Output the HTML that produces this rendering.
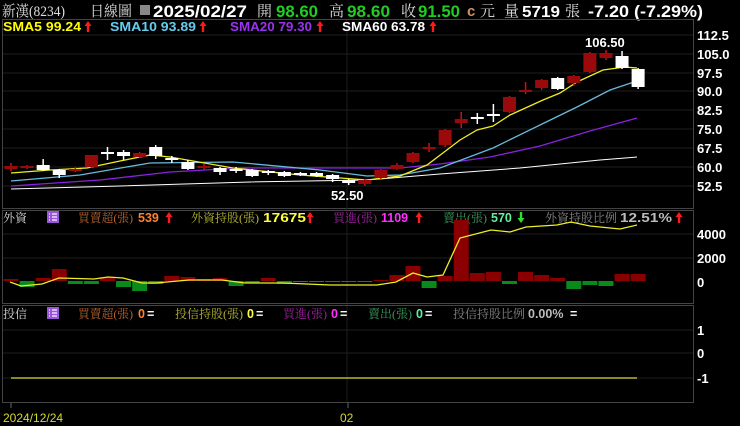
<!DOCTYPE html>
<html><head><meta charset="utf-8"><style>
html,body{margin:0;padding:0;background:#000;width:740px;height:426px;overflow:hidden}
svg{display:block}
.c{font-family:"Liberation Sans","Noto Sans CJK TC",sans-serif}
.s{font-family:"Liberation Serif","Noto Serif CJK SC",serif}
</style></head><body>
<svg width="740" height="426" viewBox="0 0 740 426" xmlns="http://www.w3.org/2000/svg">
<rect width="740" height="426" fill="#000"/>
<g font-size="15">
<text x="2" y="16" fill="#ddd" class="s" textLength="63" lengthAdjust="spacingAndGlyphs">新漢(8234)</text>
<text x="90" y="16" fill="#ddd" class="s" textLength="42" lengthAdjust="spacingAndGlyphs">日線圖</text>
<rect x="140" y="5" width="10" height="10" fill="#888"/>
<text x="153" y="17" fill="#fff" class="c" font-weight="bold" font-size="17" textLength="94" lengthAdjust="spacingAndGlyphs">2025/02/27</text>
<text x="257" y="16" fill="#ddd" class="s">開</text>
<text x="276" y="17" fill="#22cc22" class="c" font-weight="bold" font-size="17" textLength="42" lengthAdjust="spacingAndGlyphs">98.60</text>
<text x="329" y="16" fill="#ddd" class="s">高</text>
<text x="347" y="17" fill="#22cc22" class="c" font-weight="bold" font-size="17" textLength="43" lengthAdjust="spacingAndGlyphs">98.60</text>
<text x="401" y="16" fill="#ddd" class="s">收</text>
<text x="418" y="17" fill="#22cc22" class="c" font-weight="bold" font-size="17" textLength="42" lengthAdjust="spacingAndGlyphs">91.50</text>
<text x="467" y="16" fill="#d09060" class="c" font-weight="bold">c</text>
<text x="480" y="16" fill="#ddd" class="s">元</text>
<text x="504" y="16" fill="#ddd" class="s">量</text>
<text x="522" y="17" fill="#fff" class="c" font-weight="bold" font-size="16" textLength="38" lengthAdjust="spacingAndGlyphs">5719</text>
<text x="565" y="16" fill="#ddd" class="s">張</text>
<text x="588" y="17" fill="#fff" class="c" font-weight="bold" font-size="17" textLength="115" lengthAdjust="spacingAndGlyphs">-7.20 (-7.29%)</text>
</g>
<rect x="2.5" y="19.5" width="691" height="189" fill="none" stroke="#444"/>
<g stroke="#1e1e1e" stroke-width="1">
<line x1="3" y1="35" x2="693" y2="35"/><line x1="3" y1="54" x2="693" y2="54"/><line x1="3" y1="73" x2="693" y2="73"/>
<line x1="3" y1="91" x2="693" y2="91"/><line x1="3" y1="110" x2="693" y2="110"/><line x1="3" y1="129" x2="693" y2="129"/>
<line x1="3" y1="148" x2="693" y2="148"/><line x1="3" y1="167" x2="693" y2="167"/><line x1="3" y1="186" x2="693" y2="186"/>
<line x1="347" y1="20" x2="347" y2="402"/>
<line x1="3" y1="330" x2="693" y2="330"/><line x1="3" y1="353" x2="693" y2="353"/><line x1="3" y1="378" x2="693" y2="378"/>
<line x1="3" y1="234" x2="693" y2="234"/><line x1="3" y1="258" x2="693" y2="258"/>
</g>
<g class="c" font-weight="bold" font-size="13" fill="#fff">
<text x="697" y="40">112.5</text><text x="697" y="59">105.0</text><text x="697" y="78">97.5</text>
<text x="697" y="96">90.0</text><text x="697" y="115">82.5</text><text x="697" y="134">75.0</text>
<text x="697" y="153">67.5</text><text x="697" y="172">60.0</text><text x="697" y="191">52.5</text>
<text x="697" y="239">4000</text><text x="697" y="263">2000</text><text x="697" y="287">0</text>
<text x="697" y="335">1</text><text x="697" y="358">0</text><text x="697" y="383">-1</text>
</g>
<g class="c" font-weight="bold" font-size="12.5">
<text x="3" y="31" fill="#ffff00" textLength="78" lengthAdjust="spacingAndGlyphs">SMA5 99.24</text>
<text x="110" y="31" fill="#66ccee" textLength="86" lengthAdjust="spacingAndGlyphs">SMA10 93.89</text>
<text x="230" y="31" fill="#9933ee" textLength="82" lengthAdjust="spacingAndGlyphs">SMA20 79.30</text>
<text x="342" y="31" fill="#fff" textLength="83" lengthAdjust="spacingAndGlyphs">SMA60 63.78</text>
<text x="585" y="47" fill="#fff" font-size="13">106.50</text>
<text x="331" y="200" fill="#fff" font-size="13">52.50</text>
</g>
<g id="arrows" fill="#ff1a1a"></g>
<g fill="none" stroke-width="1.3">
<polyline stroke="#fff" stroke-width="1" points="11,189 120,186 250,182 367,180 440,174 520,168 600,160 637,157"/>
<polyline stroke="#8822dd" points="11,186 100,180 170,172 240,168 300,168 367,168 400,168 440,164 490,157 540,146 590,131 637,118"/>
<polyline stroke="#66bbdd" points="11,181 80,175 150,163 233,162 320,170 367,176 400,175 440,168 493,148 540,125 577,107 610,90 637,81"/>
<polyline stroke="#eeee22" points="11,173 50,170 87,168 120,161 150,155 170,157 233,168 300,175 367,180 400,176 427,165 460,140 477,130 493,126 510,115 543,100 560,93 577,82 603,70 625,67 637,68"/>
</g>
<g id="cd"></g>
<rect x="2.5" y="210.5" width="691" height="93" fill="none" stroke="#444"/>
<g class="s" font-size="12">
<text x="3" y="222" fill="#ddd">外資</text>
<text x="78" y="222" fill="#b8642a" textLength="55" lengthAdjust="spacingAndGlyphs">買賣超(張)</text>
<text x="191" y="222" fill="#b8b830" textLength="68" lengthAdjust="spacingAndGlyphs">外資持股(張)</text>
<text x="333" y="222" fill="#a020a0" textLength="44" lengthAdjust="spacingAndGlyphs">買進(張)</text>
<text x="443" y="222" fill="#3a9a5a" textLength="44" lengthAdjust="spacingAndGlyphs">賣出(張)</text>
<text x="545" y="222" fill="#888" textLength="72" lengthAdjust="spacingAndGlyphs">外資持股比例</text>
<text x="3" y="318" fill="#ddd">投信</text>
<text x="78" y="318" fill="#b8642a" textLength="55" lengthAdjust="spacingAndGlyphs">買賣超(張)</text>
<text x="175" y="318" fill="#b8b830" textLength="68" lengthAdjust="spacingAndGlyphs">投信持股(張)</text>
<text x="283" y="318" fill="#a020a0" textLength="44" lengthAdjust="spacingAndGlyphs">買進(張)</text>
<text x="368" y="318" fill="#3a9a5a" textLength="44" lengthAdjust="spacingAndGlyphs">賣出(張)</text>
<text x="453" y="318" fill="#888" textLength="72" lengthAdjust="spacingAndGlyphs">投信持股比例</text>
</g>
<g class="c" font-weight="bold" font-size="12.5">
<text x="138" y="222" fill="#ff8030">539</text>
<text x="263" y="222" fill="#ffff40" textLength="43" lengthAdjust="spacingAndGlyphs">17675</text>
<text x="381" y="222" fill="#ff30ff">1109</text>
<text x="491" y="222" fill="#60f0a0">570</text>
<text x="620" y="222" fill="#bbb" textLength="52" lengthAdjust="spacingAndGlyphs">12.51%</text>
<text x="138" y="318" fill="#ff8030">0</text><text x="147" y="318" fill="#fff">=</text>
<text x="247" y="318" fill="#ffff40">0</text><text x="256" y="318" fill="#fff">=</text>
<text x="331" y="318" fill="#ff30ff">0</text><text x="340" y="318" fill="#fff">=</text>
<text x="416" y="318" fill="#60f0a0">0</text><text x="425" y="318" fill="#fff">=</text>
<text x="528" y="318" fill="#bbb">0.00%</text><text x="570" y="318" fill="#fff">=</text>
</g>
<g>
<rect x="47" y="211" width="12" height="12" fill="#9955dd"/>
<rect x="47" y="307" width="12" height="12" fill="#9955dd"/>
<g stroke="#fff" stroke-width="1.2">
<line x1="49" y1="214" x2="50" y2="214"/><line x1="52" y1="214" x2="57" y2="214"/>
<line x1="49" y1="217" x2="50" y2="217"/><line x1="52" y1="217" x2="57" y2="217"/>
<line x1="49" y1="220" x2="50" y2="220"/><line x1="52" y1="220" x2="57" y2="220"/>
<line x1="49" y1="310" x2="50" y2="310"/><line x1="52" y1="310" x2="57" y2="310"/>
<line x1="49" y1="313" x2="50" y2="313"/><line x1="52" y1="313" x2="57" y2="313"/>
<line x1="49" y1="316" x2="50" y2="316"/><line x1="52" y1="316" x2="57" y2="316"/>
</g></g>
<g id="bars"></g>
<polyline fill="none" stroke="#eeee22" stroke-width="1.3" points="10,282 21,286 42,284 59,278 94,279 108,277 123,278 142,283 156,283 189,280 222,280 245,283 283,283 330,285 377,285 396,282 413,273 427,277 443,275 460,238 491,230 510,232 526,227 557,225 571,222 590,226 620,229 637,225"/>
<rect x="2.5" y="305.5" width="691" height="97" fill="none" stroke="#444"/>
<line x1="11" y1="378" x2="637" y2="378" stroke="#b8b830" stroke-width="1.5"/>
<line x1="11" y1="403" x2="11" y2="408" stroke="#666"/>
<line x1="348" y1="403" x2="348" y2="408" stroke="#666"/>
<text x="3" y="422" fill="#d8d830" class="c" font-size="12">2024/12/24</text>
<text x="340" y="422" fill="#d8d830" class="c" font-size="12">02</text>
</svg>
<script>
(function(){
var C=[["r",166,169,163,171],["r",166,168,165,169],["w",165,170,159,171],["w",170,175,169,178],["r",169,171,167,172],["r",155,167,155,168],["w",152,154,147,160],["w",152,156,150,160],["r",153,157,152,158],["w",147,156,145,159],["w",158,160,156,163],["w",162,169,160,170],["r",166,168,164,170],["w",168,172,167,175],["w",169,171,167,173],["w",170,176,169,177],["w",171,173,170,175],["w",172,176,171,177],["w",173,175,172,176],["w",173,176,172,177],["w",175,179,174,182],["w",180,183,179,185],["r",180,184,179,186],["r",170,178,169,179],["r",165,169,163,170],["r",153,162,152,163],["r",147,149,143,152],["r",130,145,129,147],["r",119,123,112,128],["w",117,119,113,124],["w",114,116,104,122],["r",97,112,96,113],["r",90,92,82,94],["r",80,88,79,90],["w",78,89,77,90],["r",76,83,75,86],["r",53,72,52,73],["r",53,58,50,60],["w",56,68,51,69],["w",69,87,68,89]];
var B=[279,287,278,269,284,284,277,287,291,284,276,277,279,278,286,283,278,284,282,281,282,281,281,280,275,266,288,276,220,273,272,284,272,275,278,289,285,286,274,274];
var NS="http://www.w3.org/2000/svg",g=document.getElementById("cd"),bg=document.getElementById("bars"),ag=document.getElementById("arrows");
function el(p,t,a){var e=document.createElementNS(NS,t);for(var k in a)e.setAttribute(k,a[k]);p.appendChild(e);}
C.forEach(function(c,i){var x=11+16.08*i,col=c[0]=="r"?"#9a0a0a":"#fff",wc=c[0]=="r"?"#d01010":"#fff";
el(g,"line",{x1:x,x2:x,y1:c[3],y2:c[4],stroke:wc,"stroke-width":1.5});
var h=Math.max(c[2]-c[1],2);el(g,"rect",{x:x-6.5,y:c[1],width:13,height:h,fill:col});});
for(var i=0;i<40;i++){var y=B[i],x=11+16.08*i;var t0=Math.min(y,281),h=Math.abs(y-281);if(h<1)h=1;
el(bg,"rect",{x:x-7.5,y:t0,width:15,height:h,fill:y<281?"#8a0000":"#0a8a1a"});}
function up(x,y,col){el(ag,"path",{d:"M"+x+" "+y+" l-3.5 5 h2.3 v6 h2.4 v-6 h2.3 z",fill:col||"#ff1a1a"});}
function dn(x,y,col){el(ag,"path",{d:"M"+x+" "+(y+11)+" l-3.5 -5 h2.3 v-6 h2.4 v6 h2.3 z",fill:col});}
[88,203,320,433].forEach(function(x){up(x,21);});
[169,310,419,679].forEach(function(x){up(x,212);});
dn(521,212,"#30dd30");
})();
</script>
</body></html>
